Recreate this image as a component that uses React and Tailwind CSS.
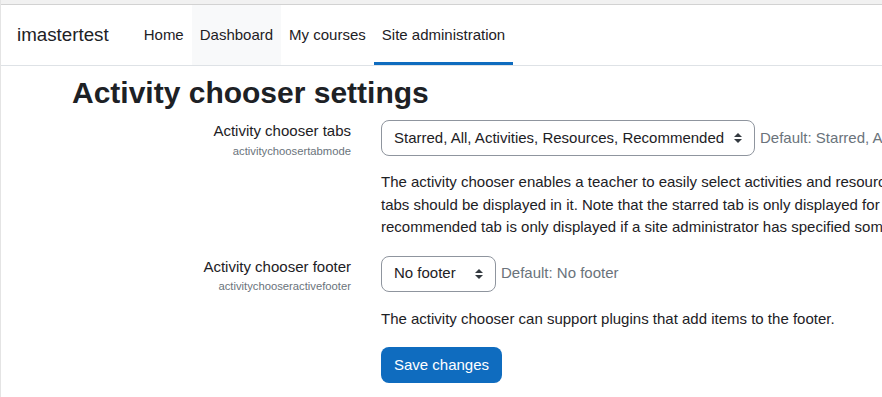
import React from 'react';

// double caret used by the custom selects
function SelectCaret() {
  return (
    <svg width="8" height="10" viewBox="0 0 4 5" className="shrink-0">
      <path d="M2 0L0 2h4zm0 5L0 3h4z" fill="#343a40" />
    </svg>
  );
}

function FakeSelect({ value, width }) {
  return (
    <div
      className={`h-[36px] ${width} shrink-0 flex items-center justify-between pl-[12px] pr-[12px] border border-[#8f959e] rounded-[8px] bg-white text-[15px] text-[#1d2125] whitespace-nowrap`}
    >
      <span>{value}</span>
      <SelectCaret />
    </div>
  );
}

function SettingRow({ label, shortname, value, width, defaultText, descGap, children }) {
  return (
    <div className="flex items-start">
      <div className="w-[350px] shrink-0 flex flex-col items-end text-right">
        <span className="text-[15px] leading-[22.5px] text-[#1d2125]">{label}</span>
        <span className="text-[11.25px] leading-[17px] text-[#6a737b]">{shortname}</span>
      </div>
      <div className="ml-[30px] flex flex-col">
        <div className="flex items-center">
          <FakeSelect value={value} width={width} />
          <span className="ml-[5px] text-[15px] text-[#6a737b] whitespace-nowrap">{defaultText}</span>
        </div>
        <div className={`${descGap} text-[15px] leading-[22.5px] text-[#1d2125] whitespace-nowrap`}>
          {children}
        </div>
      </div>
    </div>
  );
}

const navItems = [
  { name: 'Home' },
  { name: 'Dashboard', hover: true },
  { name: 'My courses' },
  { name: 'Site administration', active: true },
];

export default function App() {
  return (
    <div className="min-h-screen w-full overflow-hidden bg-white border-l border-[#e4e4e4] font-['Liberation_Sans',Arial,sans-serif] text-[#1d2125]">
      <div className="h-[5px] bg-[#f1f1f1] border-b border-[#d2d2d2]" />

      {/* top navbar */}
      <nav className="h-[61px] flex items-stretch border-b border-[#dee2e6] bg-white">
        <div className="flex items-center pl-[16px] pr-[27px] text-[18.75px] whitespace-nowrap">
          imastertest
        </div>
        <div className="flex items-stretch">
          {navItems.map(item => (
            <div
              key={item.name}
              className={`relative flex items-center px-[8px] text-[15px] whitespace-nowrap ${item.hover ? 'bg-[#f8f9fa]' : ''}`}
            >
              {item.name}
              {item.active && (
                <span className="absolute left-0 right-0 bottom-0 h-[3px] bg-[#0f6cbf]" />
              )}
            </div>
          ))}
        </div>
      </nav>

      <main className="pl-[71px] pt-[9px]">
        <h2 className="text-[30px] leading-[36px] font-bold text-[#1d2125] whitespace-nowrap">
          Activity chooser settings
        </h2>
      </main>

      <form className="mt-[9px] flex flex-col">
        <SettingRow
          label="Activity chooser tabs"
          shortname="activitychoosertabmode"
          value="Starred, All, Activities, Resources, Recommended"
          width="w-[374px]"
          defaultText="Default: Starred, All, Activities, Resources, Recommended"
          descGap="mt-[15px]"
        >
          The activity chooser enables a teacher to easily select activities and resources to add to their course. This setting determines which
          <br />
          tabs should be displayed in it. Note that the starred tab is only displayed for a user if they have starred one or more activities and the
          <br />
          recommended tab is only displayed if a site administrator has specified some recommended activities.
        </SettingRow>

        <div className="mt-[17px]">
          <SettingRow
            label="Activity chooser footer"
            shortname="activitychooseractivefooter"
            value="No footer"
            width="w-[115px]"
            defaultText="Default: No footer"
            descGap="mt-[16px]"
          >
            The activity chooser can support plugins that add items to the footer.
          </SettingRow>
        </div>

        <div className="mt-[17px] pl-[380px] pb-[20px]">
          <button
            type="button"
            className="h-[36px] w-[121px] rounded-[8px] bg-[#0f6cbf] text-white text-[15px] whitespace-nowrap"
          >
            Save changes
          </button>
        </div>
      </form>
    </div>
  );
}
